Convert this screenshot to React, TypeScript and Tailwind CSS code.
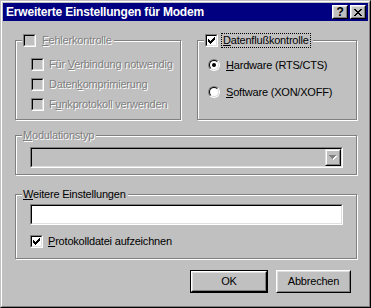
import React from "react";

const FONT = "font-['Liberation_Sans',Arial,sans-serif]";
const GRAYED = "text-[#808080] [text-shadow:1px_1px_0_#fff]";

function CheckMark() {
  // 7x7 windows style tick
  return (
    <svg width="7" height="7" viewBox="0 0 7 7" shapeRendering="crispEdges">
      <path
        d="M6 0h1v3h-1zM5 1h1v3h-1zM4 2h1v3h-1zM3 3h1v3h-1zM2 4h1v3h-1zM1 3h1v3h-1zM0 2h1v3h-1z"
        fill="#000"
      />
    </svg>
  );
}

function Check({ checked, disabled }: { checked?: boolean; disabled?: boolean }) {
  return (
    <div className="w-[13px] h-[13px] shrink-0 border border-t-[#808080] border-l-[#808080] border-b-white border-r-white">
      <div
        className={`w-full h-full border border-t-black border-l-black border-b-[#dfdfdf] border-r-[#dfdfdf] flex items-center justify-center ${
          disabled ? "bg-[#c0c0c0]" : "bg-white"
        }`}
      >
        {checked && <CheckMark />}
      </div>
    </div>
  );
}

function Radio({ checked }: { checked?: boolean }) {
  return (
    <div className="w-[12px] h-[12px] shrink-0 rounded-full border border-t-[#808080] border-l-[#808080] border-b-white border-r-white">
      <div className="w-full h-full rounded-full border border-t-black border-l-black border-b-[#dfdfdf] border-r-[#dfdfdf] bg-white flex items-center justify-center">
        {checked && <div className="w-[4px] h-[4px] rounded-full bg-black" />}
      </div>
    </div>
  );
}

function Group({
  legend,
  className,
  children,
}: {
  legend: React.ReactNode;
  className?: string;
  children?: React.ReactNode;
}) {
  return (
    <div
      className={`relative border border-[#808080] shadow-[inset_1px_1px_0_#fff,1px_1px_0_#fff] ${className ?? ""}`}
    >
      <div className="absolute left-[6px] -top-[7px] h-[13px] flex items-center bg-[#c0c0c0] pl-px pr-[2px]">
        {legend}
      </div>
      {children}
    </div>
  );
}

function Row({
  checked,
  disabled,
  children,
}: {
  checked?: boolean;
  disabled?: boolean;
  children: React.ReactNode;
}) {
  return (
    <div className="flex items-center h-[13px] gap-[5px]">
      <Check checked={checked} disabled={disabled} />
      <span className={`leading-[13px] ${disabled ? GRAYED : "text-black"}`}>{children}</span>
    </div>
  );
}

function Button({ children, isDefault }: { children: React.ReactNode; isDefault?: boolean }) {
  const face = (
    <div className="h-full border border-t-white border-l-white border-b-black border-r-black">
      <div className="h-full flex items-center justify-center border border-t-[#dfdfdf] border-l-[#dfdfdf] border-b-[#808080] border-r-[#808080] text-black">
        {children}
      </div>
    </div>
  );
  return isDefault ? (
    <div className="w-[78px] h-[23px] border border-black">{face}</div>
  ) : (
    <div className="w-[75px] h-[23px]">{face}</div>
  );
}

function TitleButton({ children }: { children: React.ReactNode }) {
  return (
    <div className="w-[16px] h-[14px] bg-[#c0c0c0] border border-t-white border-l-white border-b-black border-r-black">
      <div className="h-full flex items-center justify-center border border-t-[#dfdfdf] border-l-[#dfdfdf] border-b-[#808080] border-r-[#808080]">
        {children}
      </div>
    </div>
  );
}

export default function App() {
  return (
    <div className={`w-[371px] h-[308px] bg-[#c0c0c0] text-[11px] tracking-[-0.2px] ${FONT}`}>
      <div className="h-full border border-t-[#c0c0c0] border-l-[#c0c0c0] border-b-black border-r-black">
        <div className="h-full border border-t-white border-l-white border-b-[#808080] border-r-[#808080] p-px">
          {/* Title bar */}
          <div className="h-[18px] bg-[#000080] flex items-center pl-[3px] pr-[2px]">
            <span className="text-white font-bold text-[12px] leading-none flex-1">
              Erweiterte Einstellungen für Modem
            </span>
            <div className="flex gap-[2px]">
              <TitleButton>
                <span className="font-bold text-[12px] leading-none text-black">?</span>
              </TitleButton>
              <TitleButton>
                <svg width="8" height="7" viewBox="0 0 8 7" shapeRendering="crispEdges">
                  <path
                    d="M0 0h2v1h-2zM6 0h2v1h-2zM1 1h2v1h-2zM5 1h2v1h-2zM2 2h4v1h-4zM3 3h2v1h-2zM2 4h4v1h-4zM1 5h2v1h-2zM5 5h2v1h-2zM0 6h2v1h-2zM6 6h2v1h-2z"
                    fill="#000"
                  />
                </svg>
              </TitleButton>
            </div>
          </div>

          {/* Body */}
          <div className="pl-[12px] pt-[19px]">
            <div className="flex">
              <Group
                className="w-[166px] h-[80px]"
                legend={
                  <div className="flex items-center gap-[6px]">
                    <Check disabled />
                    <span className={GRAYED}>
                      <u>F</u>ehlerkontrolle
                    </span>
                  </div>
                }
              >
                <div className="flex flex-col gap-[7px] pl-[15px] pt-[17px]">
                  <Row disabled>
                    Für <u>V</u>erbindung notwendig
                  </Row>
                  <Row disabled>
                    Daten<u>k</u>omprimierung
                  </Row>
                  <Row disabled>
                    F<u>u</u>nkprotokoll verwenden
                  </Row>
                </div>
              </Group>

              <Group
                className="ml-[16px] w-[160px] h-[80px]"
                legend={
                  <div className="flex items-center gap-[3px]">
                    <Check checked />
                    <span className="border border-dotted border-black px-px leading-[13px] text-black">
                      <u>D</u>atenflußkontrolle
                    </span>
                  </div>
                }
              >
                <div className="flex flex-col gap-[15px] pl-[10px] pt-[18px]">
                  <div className="flex items-center gap-[6px] h-[12px]">
                    <Radio checked />
                    <span className="text-black">
                      <u>H</u>ardware (RTS/CTS)
                    </span>
                  </div>
                  <div className="flex items-center gap-[6px] h-[12px]">
                    <Radio />
                    <span className="text-black">
                      <u>S</u>oftware (XON/XOFF)
                    </span>
                  </div>
                </div>
              </Group>
            </div>

            <Group
              className="mt-[15px] w-[342px] h-[40px]"
              legend={
                <span className={GRAYED}>
                  <u>M</u>odulationstyp
                </span>
              }
            >
              <div className="pl-[14px] pt-[11px]">
                <div className="w-[313px] h-[21px] border border-t-[#808080] border-l-[#808080] border-b-white border-r-white">
                  <div className="h-full border border-t-black border-l-black border-b-[#dfdfdf] border-r-[#dfdfdf] bg-[#c0c0c0] flex justify-end p-0">
                    <div className="w-[16px] h-full border border-t-[#dfdfdf] border-l-[#dfdfdf] border-b-black border-r-black">
                      <div className="h-full flex items-center justify-center border border-t-white border-l-white border-b-[#808080] border-r-[#808080]">
                        <svg width="8" height="5" viewBox="0 0 8 5" shapeRendering="crispEdges">
                          <path d="M1 1h7v1h-7zM2 2h5v1h-5zM3 3h3v1h-3zM4 4h1v1h-1z" fill="#fff" />
                          <path d="M0 0h7v1h-7zM1 1h5v1h-5zM2 2h3v1h-3zM3 3h1v1h-1z" fill="#808080" />
                        </svg>
                      </div>
                    </div>
                  </div>
                </div>
              </div>
            </Group>

            <Group
              className="mt-[19px] w-[342px] h-[65px]"
              legend={
                <span className="text-black">
                  <u>W</u>eitere Einstellungen
                </span>
              }
            >
              <div className="pl-[14px] pt-[9px]">
                <div className="w-[313px] h-[21px] border border-t-[#808080] border-l-[#808080] border-b-white border-r-white">
                  <div className="h-full border border-t-black border-l-black border-b-[#dfdfdf] border-r-[#dfdfdf] bg-white" />
                </div>
                <div className="mt-[10px]">
                  <Row checked>
                    <u>P</u>rotokolldatei aufzeichnen
                  </Row>
                </div>
              </div>
            </Group>

            <div className="mt-[11px] w-[342px] pr-[6px] flex justify-end gap-[8px]">
              <Button isDefault>OK</Button>
              <Button>Abbrechen</Button>
            </div>
          </div>
        </div>
      </div>
    </div>
  );
}
